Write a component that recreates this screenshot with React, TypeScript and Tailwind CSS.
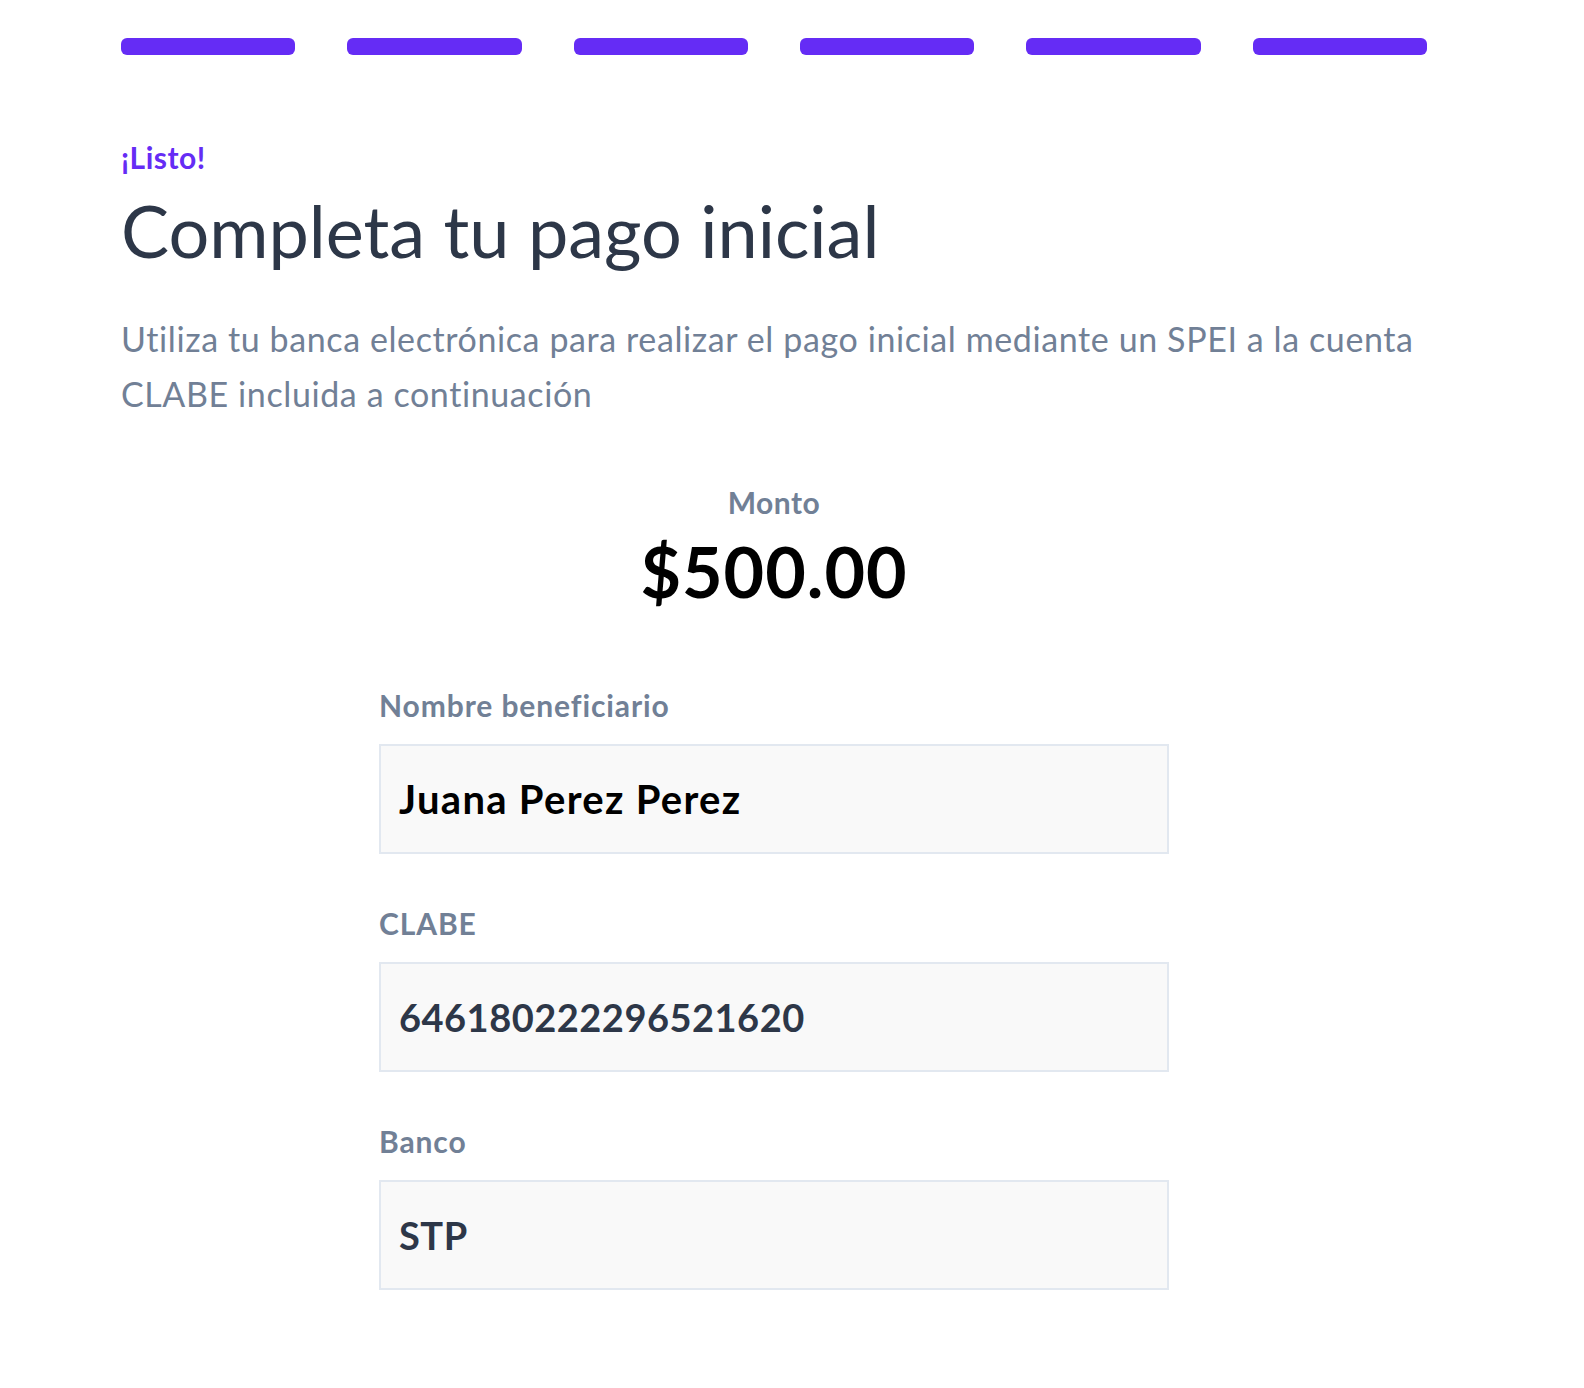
import React from "react";

const font = { fontFamily: "Lato, 'Noto Sans', sans-serif" };

function Field({ label, value, dark }: { label: string; value: string; dark?: boolean }) {
  return (
    <div className="flex flex-col">
      <div className="text-[30px] font-bold tracking-[0.9px] text-[#718096] leading-[40px]">{label}</div>
      <div className="mt-[19px] h-[110px] border-2 border-[#e2e8f0] bg-[#f9f9f9] flex items-center px-[18px]">
        {dark ? (
          <span className="text-[40px] font-bold tracking-[1.3px] text-black">{value}</span>
        ) : (
          <span className="text-[38px] font-bold tracking-[0.5px] text-[#2d3748]">{value}</span>
        )}
      </div>
    </div>
  );
}

export default function App() {
  return (
    <div className="min-h-[1388px] bg-white" style={font}>
      <div className="ml-[121px] w-[1306px] pt-[38px]">
        <div className="grid grid-cols-6 gap-[52px]">
          {Array.from({ length: 6 }).map((_, i) => (
            <div key={i} className="h-[17px] rounded-[6px] bg-[#652cf5]" />
          ))}
        </div>
        <div className="mt-[82px] text-[30px] font-bold tracking-[0.5px] text-[#652cf5] leading-[40px]">¡Listo!</div>
        <h1 className="mt-[8px] text-[72px] text-[#2d3748] leading-[90px]">Completa tu pago inicial</h1>
        <p className="mt-[36px] text-[34px] tracking-[0.6px] text-[#718096] leading-[55px]">
          Utiliza tu banca electrónica para realizar el pago inicial mediante un SPEI a la cuenta CLABE incluida a
          continuación
        </p>
        <div className="mt-[61px] flex flex-col items-center">
          <div className="text-[30px] font-bold tracking-[0.5px] text-[#718096] leading-[40px]">Monto</div>
          <div className="mt-[9px] text-[70px] font-bold tracking-[1px] text-black leading-[80px]">$500.00</div>
        </div>
        <div className="mx-auto mt-[74px] w-[790px] flex flex-col gap-[49px]">
          <Field label="Nombre beneficiario" value="Juana Perez Perez" dark />
          <Field label="CLABE" value="646180222296521620" />
          <Field label="Banco" value="STP" />
        </div>
      </div>
    </div>
  );
}
